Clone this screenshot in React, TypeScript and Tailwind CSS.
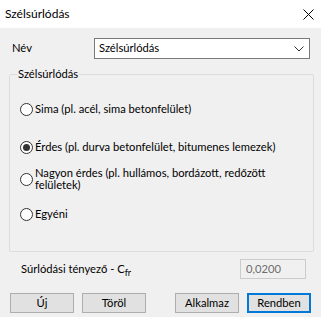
import React from 'react'

function Radio({ checked }: { checked?: boolean }) {
  return (
    <span className="w-[13px] h-[13px] rounded-full border border-[#333333] bg-white flex items-center justify-center shrink-0">
      {checked && <span className="w-[7px] h-[7px] rounded-full bg-[#333333]" />}
    </span>
  )
}

export default function App() {
  const options = [
    { label: 'Sima (pl. acél, sima betonfelület)', mt: 'mt-[26px]' },
    { label: 'Érdes (pl. durva betonfelület, bitumenes lemezek)', mt: 'mt-[22px]', checked: true },
  ]
  return (
    <div className="w-[321px] h-[317px] bg-[#f0f0f0] text-[11.2px] text-black overflow-hidden" style={{ fontFamily: 'Lato, "Liberation Sans", sans-serif' }}>
      {/* title bar */}
      <div className="h-[28px] bg-white flex items-center justify-between pl-[5px] pr-[7px]">
        <span className="text-[12px] leading-none">Szélsúrlódás</span>
        <svg width="11" height="11" viewBox="0 0 11 11" className="mt-[1px]">
          <path d="M0.5 0.5 L10.5 10.5 M10.5 0.5 L0.5 10.5" stroke="#000" strokeWidth="1" />
        </svg>
      </div>

      {/* name row */}
      <div className="flex items-center mt-[10px] pl-[12px] h-[21px]">
        <span className="w-[82px]">Név</span>
        <div className="w-[216px] h-[21px] bg-white border border-[#7a7a7a] flex items-center justify-between pl-[4px] pr-[5px]">
          <span>Szélsúrlódás</span>
          <svg width="10" height="6" viewBox="0 0 10 6">
            <path d="M0.5 0.5 L5 5 L9.5 0.5" stroke="#333" strokeWidth="1" fill="none" />
          </svg>
        </div>
      </div>

      {/* group box */}
      <div className="relative ml-[9px] mt-[15px] w-[305px] h-[178px] border border-[#dcdcdc] rounded-[2px]">
        <span className="absolute left-[7px] -top-[9px] px-[1px] bg-[#f0f0f0] leading-[16px]">Szélsúrlódás</span>
        <div className="flex flex-col pl-[10px]">
          {options.map(o => (
            <div key={o.label} className={`flex items-center gap-[2px] h-[16px] whitespace-nowrap ${o.mt}`}>
              <Radio checked={o.checked} />
              <span className="leading-[16px]">{o.label}</span>
            </div>
          ))}
          <div className="flex items-center gap-[2px] mt-[12px]">
            <Radio />
            <span className="leading-[12px] w-[240px]">Nagyon érdes (pl. hullámos, bordázott, redőzött felületek)</span>
          </div>
          <div className="flex items-center gap-[2px] h-[16px] mt-[15px]">
            <Radio />
            <span className="leading-[16px]">Egyéni</span>
          </div>
        </div>
      </div>

      {/* coefficient row */}
      <div className="flex items-center justify-between mt-[7px] pl-[21px] pr-[15px] h-[20px]">
        <span>
          Súrlódási tényező - C<sub className="text-[9px] align-baseline relative top-[3px]">fr</sub>
        </span>
        <div className="w-[66px] h-[20px] border border-[#cccccc] bg-[#f0f0f0] flex items-center pl-[5px] text-[#6d6d6d]">
          0,0200
        </div>
      </div>

      {/* buttons */}
      <div className="flex items-center mt-[14px] pl-[10px] h-[20px]">
        <button className="w-[64px] h-[20px] bg-[#e1e1e1] border border-[#adadad] leading-none">Új</button>
        <button className="ml-[8px] w-[64px] h-[20px] bg-[#e1e1e1] border border-[#adadad] leading-none">Töröl</button>
        <button className="ml-[29px] w-[64px] h-[20px] bg-[#e1e1e1] border border-[#adadad] leading-none">Alkalmaz</button>
        <button className="ml-[8px] w-[64px] h-[20px] bg-[#e1e1e1] border-2 border-[#0078d7] leading-none">Rendben</button>
      </div>
    </div>
  )
}
